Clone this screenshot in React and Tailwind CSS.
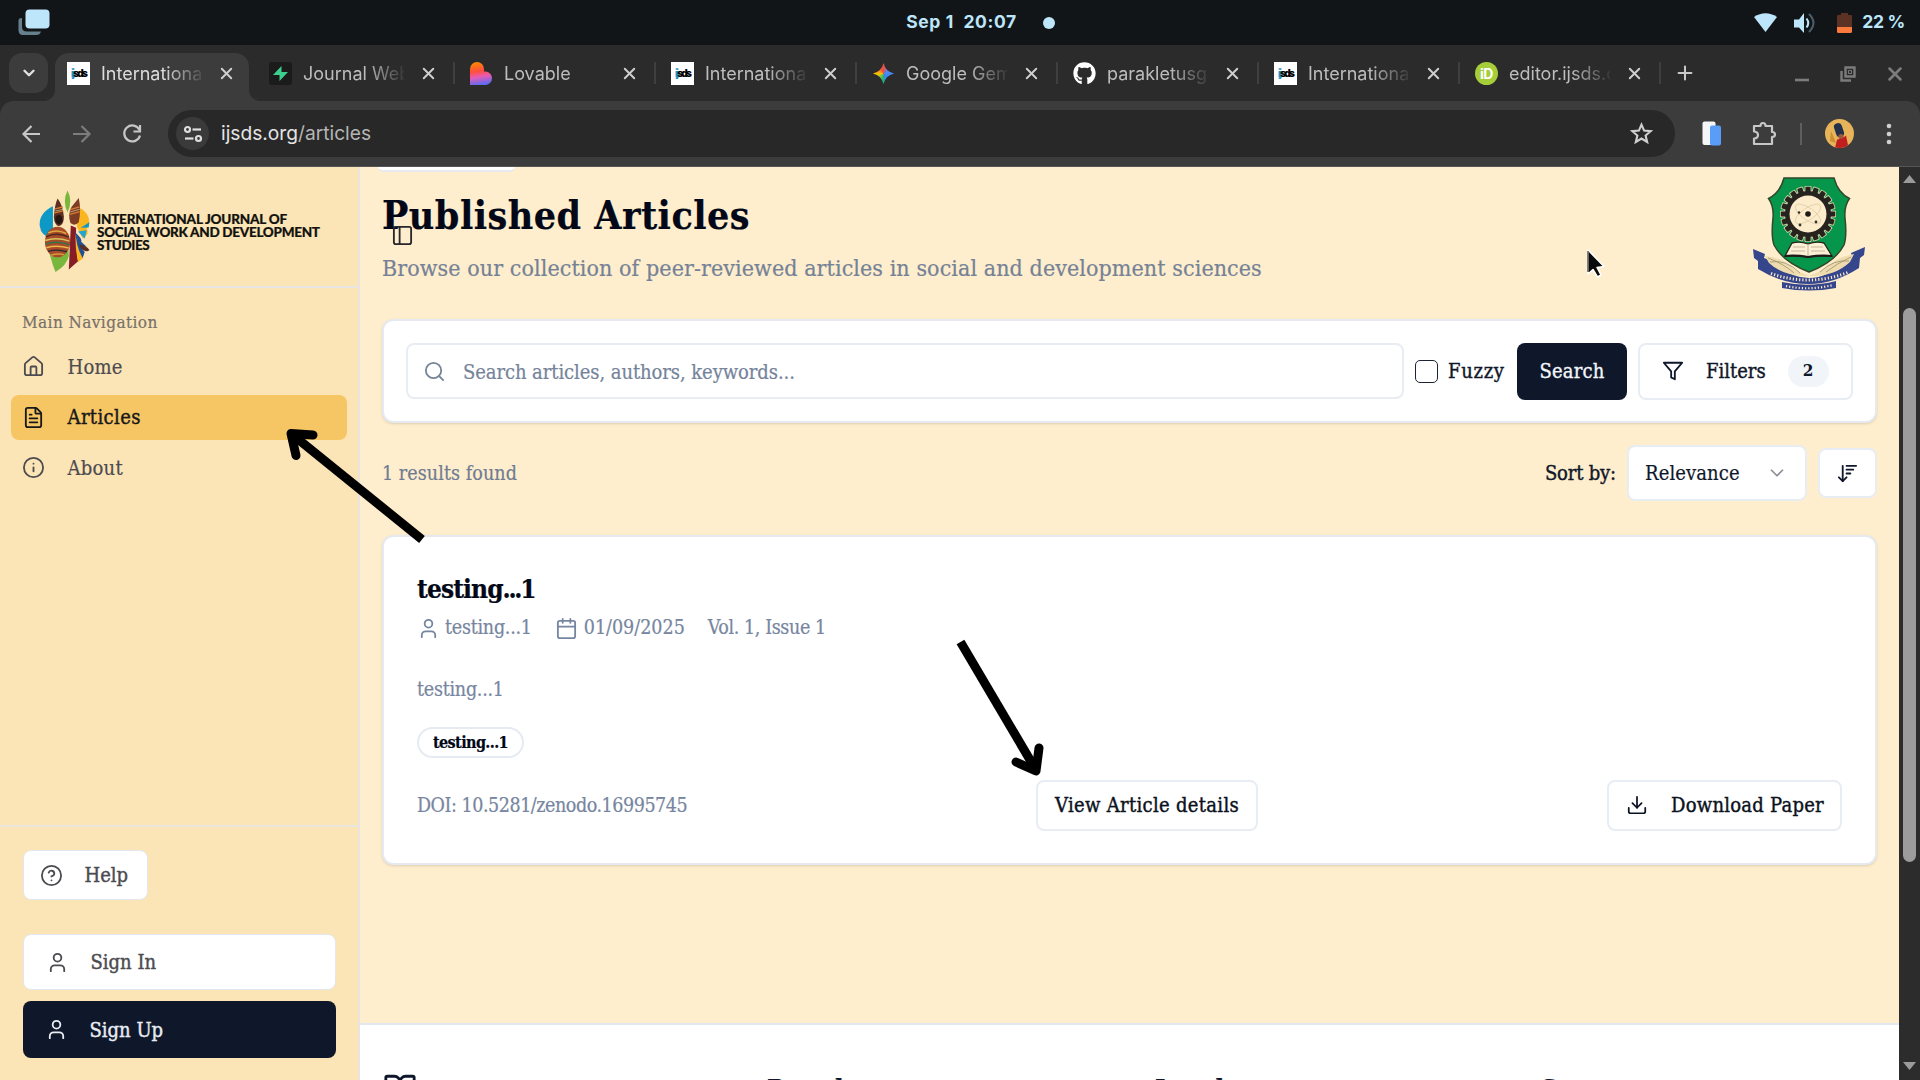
import React from "react";
import {
  House, FileText, Info, CircleHelp, User, Calendar, Search, Download,
  ChevronDown, ArrowDownWideNarrow, PanelLeft, BookOpen, X, Plus,
} from "lucide-react";
import { FaGithub } from "react-icons/fa";

function StatusBar() {
  return (
    <div className="grid h-[45px] shrink-0 grid-cols-[1fr_auto_1fr] items-center bg-[#111518] font-[Inter,sans-serif] text-[17.5px] font-bold text-[#bde6fb]">
      <svg className="ml-[18px] h-[27px] w-8" viewBox="0 0 32 27">
        <path d="M4 9 C1 9 .5 10 .5 12 V21 Q.5 26 5 26 H18 Q22 26 23 22.500 H9 Q4 22.500 4 18 Z" fill="#67808d" />
        <rect x="7.500" y=".5" width="24" height="19" rx="4" fill="#bde6fb" />
      </svg>
      <div className="flex items-center pl-[41px]">
        <span className="whitespace-pre tracking-[.62px]">Sep 1  20:07</span>
        <span className="ml-[26px] size-3 rounded-full bg-[#bde6fb]" />
      </div>
      <div className="flex items-center justify-end pr-[15px]">
        <svg className="mr-[17px] h-5 w-[23px]" viewBox="0 0 23 20">
          <path d="M0 4 Q11.500 -3.500 23 4 L11.500 19 Z" fill="#bde6fb" />
        </svg>
        <svg className="mr-[21px] h-[22px] w-[22px]" viewBox="0 0 22 22">
          <path d="M0 7.500 H5 L10 1 V21 L5 15.500 H0 Z" fill="#bde6fb" />
          <path d="M12.500 6.500 Q16 11 12.500 15.500" fill="none" stroke="#bde6fb" strokeWidth="2" />
          <path d="M15 2 Q24 11 15 20" fill="none" stroke="#4b5f6a" strokeWidth="2" />
        </svg>
        <svg className="mr-[10px] h-5 w-[15px]" viewBox="0 0 15 20">
          <path d="M1 2 H4 V0 H11 V2 H14 Q15 2 15 3 V14 H0 V3 Q0 2 1 2 Z" fill="#5b3223" />
          <path d="M0 14 H15 V18.500 Q15 20 13.500 20 H1.500 Q0 20 0 18.500 Z" fill="#f97a3c" />
        </svg>
        <span className="tracking-[-.3px]">22 %</span>
      </div>
    </div>
  );
}

function JournalFavicon() {
  return (
    <span className="flex size-[23px] shrink-0 items-center justify-center bg-white pb-[2px] font-[Inter,sans-serif] text-[10px] font-black leading-none tracking-[-1.8px]">
      <span className="text-[#2490c8]">ij</span><span className="text-black">sds</span>
    </span>
  );
}

function SupabaseFavicon() {
  return (
    <svg className="size-[23px] shrink-0" viewBox="0 0 23 23">
      <rect width="23" height="23" rx="3" fill="#1b1b1b" />
      <path d="M12.500 4 L4 13 H10.500 V19 L19 10 H12.500 Z" fill="#3ecf8e" />
    </svg>
  );
}

function LovableFavicon() {
  return (
    <svg className="size-[23px] shrink-0" viewBox="0 0 23 23">
      <defs>
        <linearGradient id="lov" x1=".3" y1="0" x2=".45" y2="1">
          <stop offset="0" stopColor="#ff8a00" /><stop offset=".4" stopColor="#ff4f3d" />
          <stop offset=".65" stopColor="#e85bb5" /><stop offset="1" stopColor="#5a6cf5" />
        </linearGradient>
      </defs>
      <path d="M7 0 A7 7 0 0 1 14 7 V9.500 H16 A6.800 6.800 0 0 1 16 23 H0 V7 A7 7 0 0 1 7 0 Z" fill="url(#lov)" />
    </svg>
  );
}

function GeminiFavicon() {
  return (
    <span className="flex size-[23px] shrink-0 items-center justify-center">
      <span className="size-[21px] bg-[conic-gradient(from_0deg,#e8504a,#4b8bf5_70deg,#3b82f6_150deg,#22b573_185deg,#f5c400_265deg,#f0503c_340deg,#e8504a)] [clip-path:path('M10.5_0_Q12.500_8.500_21_10.5_Q12.500_12.500_10.5_21_Q8.500_12.500_0_10.5_Q8.500_8.500_10.5_0Z')]" />
    </span>
  );
}

function OrcidFavicon() {
  return (
    <span className="flex size-[23px] shrink-0 items-center justify-center rounded-full bg-[#a6ce39] font-[Inter,sans-serif] text-[14px] font-bold leading-none tracking-[-.5px] text-white">iD</span>
  );
}

const TABS = [
  { icon: <JournalFavicon />, title: "International", active: true },
  { icon: <SupabaseFavicon />, title: "Journal Webs" },
  { icon: <LovableFavicon />, title: "Lovable" },
  { icon: <JournalFavicon />, title: "International" },
  { icon: <GeminiFavicon />, title: "Google Gemini" },
  { icon: <FaGithub className="size-[23px] shrink-0 text-white" />, title: "parakletusgit" },
  { icon: <JournalFavicon />, title: "International" },
  { icon: <OrcidFavicon />, title: "editor.ijsds.org" },
];

function Tab({ icon, title, active, divider }) {
  return (
    <div className={"relative flex h-[48px] shrink-0 items-start pt-[9px] " + (active ? "w-[194px] mr-[5px] pl-[12px] bg-[#3c3c3c] rounded-t-[14px] text-[#dcdcdc]" : "w-[201px] pl-[15px] text-[#bdbdbd]")}>
      {active && (
        <>
          <span className="absolute -left-3 bottom-0 size-3 bg-[radial-gradient(circle_at_0_0,#2b2b2b_12px,#3c3c3c_12.5px)]" />
          <span className="absolute -right-3 bottom-0 size-3 bg-[radial-gradient(circle_at_100%_0,#2b2b2b_12px,#3c3c3c_12.5px)]" />
        </>
      )}
      {icon}
      <span className="ml-[11px] w-[101px] overflow-hidden whitespace-nowrap text-[18px] leading-[24px] [mask-image:linear-gradient(to_right,black_62%,transparent_104%)]">{title}</span>
      <X className="ml-[15px] mt-[2px] size-[19px] shrink-0 text-[#cfcfcf]" strokeWidth={2.4} />
      {divider && <span className="absolute right-0 top-[9px] h-[22px] w-[2px] bg-[#3f3f3f]" />}
    </div>
  );
}

function TabStrip() {
  return (
    <div className="flex h-[56px] shrink-0 items-start bg-[#2b2b2b] pl-[9px] pt-2 font-[Inter,sans-serif]">
      <div className="mr-[7px] flex h-10 w-[39px] items-center justify-center rounded-[13px] bg-[#3c3c3c]">
        <ChevronDown className="size-[18px] text-[#e0e0e0]" strokeWidth={3.2} />
      </div>
      {TABS.map((t, i) => <Tab key={i} {...t} divider={i > 0} />)}
      <Plus className="ml-[13px] mt-[9px] size-[22px] text-[#c8c8c8]" strokeWidth={2.2} />
      <div className="ml-auto flex items-center gap-[26px] pr-[14px] pt-[10px] text-[#7c7c7c]">
        <svg className="size-5" viewBox="0 0 20 20"><path d="M3 16 H17" stroke="currentColor" strokeWidth="2.600" /></svg>
        <svg className="size-5" viewBox="0 0 20 20" fill="none" stroke="currentColor" strokeWidth="2.400">
          <path d="M7.500 3.500 H16.500 V12.500 H7.500 Z" /><path d="M3.500 7 V16.500 H13" />
          <path d="M10.500 6.500 H13.500 V9.500 H10.500 Z" strokeWidth="1" />
        </svg>
        <X className="size-[22px]" strokeWidth={2.8} />
      </div>
    </div>
  );
}

function Toolbar() {
  return (
    <div className="flex h-[66px] shrink-0 bg-[#2b2b2b]">
      <div className="flex w-full items-center rounded-t-[14px] border-b border-[#555] bg-[#3c3c3c] text-[#c7c7c7]">
        <svg className="ml-[21px] size-5" viewBox="0 0 20 20" fill="none" stroke="currentColor" strokeWidth="2.200"><path d="M10.500 2 L2.500 10 L10.500 18 M3 10 H19" /></svg>
        <svg className="ml-[31px] size-5 text-[#7d7d7d]" viewBox="0 0 20 20" fill="none" stroke="currentColor" strokeWidth="2.200"><path d="M9.500 2 L17.500 10 L9.500 18 M17 10 H1" /></svg>
        <svg className="ml-[29px] size-[22px]" viewBox="0 0 22 22" fill="none" stroke="currentColor" strokeWidth="2.200">
          <path d="M18.500 7 A8 8 0 1 0 19 12.500" /><path d="M19 2 V8.500 H12.500" />
        </svg>
        <div className="ml-[25px] flex h-[47px] w-[1507px] items-center rounded-full bg-[#282828] pl-2">
          <div className="flex size-[33px] items-center justify-center rounded-full bg-[#3a3a3a]">
            <svg className="size-5" viewBox="0 0 20 20" fill="none" stroke="#dedede" strokeWidth="2.200">
              <circle cx="4.500" cy="5.500" r="2.500" /><path d="M9.500 5.500 H18" /><circle cx="15.500" cy="14.500" r="2.500" /><path d="M2 14.500 H10.500" />
            </svg>
          </div>
          <span className="ml-[12px] font-[Inter,sans-serif] text-[19.2px] text-[#b5b5b5]"><span className="text-[#e4e4e4]">ijsds.org</span>/articles</span>
          <svg className="ml-auto mr-[22px] size-[23px]" viewBox="0 0 24 24" fill="none" stroke="#d0d0d0" strokeWidth="2.200">
            <path d="M12 2.800 L14.700 9 L21.500 9.600 L16.300 14.100 L17.900 20.800 L12 17.200 L6.100 20.800 L7.700 14.100 L2.500 9.600 L9.300 9 Z" />
          </svg>
        </div>
        <svg className="ml-[27px] h-[25px] w-[20px]" viewBox="0 0 20 25">
          <rect x=".5" y=".5" width="13" height="23.500" rx="2" fill="#f5f6f8" />
          <rect x="8" y="4.500" width="11" height="20" rx="2" fill="#5a9df8" />
        </svg>
        <svg className="ml-[29px] size-[26px]" viewBox="0 0 26 26" fill="none" stroke="#c7c7c7" strokeWidth="2.200" strokeLinejoin="round">
          <path d="M3 5 H9.500 Q9.500 2 12 2 T14.500 5 H21 V11 Q24 11 24 13.500 T21 16 V23 H3 V17.500 Q7 17.200 7 14 T3 10.500 Z" />
        </svg>
        <span className="ml-[23px] h-[22px] w-[2px] bg-[#5e5e5e]" />
        <svg className="ml-[23px] size-[29px]" viewBox="0 0 29 29">
          <clipPath id="av"><circle cx="14.500" cy="14.500" r="14.500" /></clipPath>
          <g clipPath="url(#av)">
            <rect width="29" height="29" fill="#e8b45a" />
            <path d="M6 12 L11 24 L5 22 Z" fill="#c98f35" />
            <rect x="10" y="4" width="8" height="14" rx="3.500" transform="rotate(-18 14 11)" fill="#25304a" />
            <circle cx="16" cy="17.500" r="2.600" fill="#9a5a3c" />
            <path d="M10 29 L12 20.500 L17 19.500 L21 16.500 L23 26 L20 29 Z" fill="#c01f1f" />
          </g>
        </svg>
        <svg className="ml-[32px] h-[22px] w-[6px]" viewBox="0 0 6 22" fill="#cfcfcf">
          <circle cx="3" cy="3" r="2.300" /><circle cx="3" cy="11" r="2.300" /><circle cx="3" cy="19" r="2.300" />
        </svg>
      </div>
    </div>
  );
}

function JournalLogo() {
  return (
    <svg className="h-[83px] w-[53px] shrink-0" viewBox="115 91 160 250">
      <path d="M160 140 Q118 160 120 198 Q124 232 160 238 Z" fill="#0e98c6" />
      <path d="M236 142 Q270 158 270 190 L262 208 Q272 225 250 236 L232 200 Z" fill="#fbb51e" />
      <path d="M244 205 L270 188 L268 204 Z" fill="#0e98c6" />
      <path d="M236 216 L262 212 L256 238 Z" fill="#20a5cf" />
      <path d="M204 92 Q221 124 204 158 Q188 124 204 92 Z" fill="#79b63c" />
      <path d="M146 268 Q160 322 168 338 Q202 318 208 290 L206 250 Z" fill="#79b63c" />
      <path d="M174 116 Q190 136 193 170 Q194 196 178 200 Q164 196 163 172 Q165 136 174 116 Z" fill="#5c2f20" />
      <path d="M238 115 Q246 150 238 188 Q226 202 213 190 Q204 165 216 142 Z" fill="#7c3d24" />
      <path d="M166 148 L190 142 M165 160 L191 154 M213 150 L240 142 M211 164 L241 156" stroke="#d67c35" strokeWidth="4" />
      <path d="M167 154 L191 149 M212 157 L241 149" stroke="#ded49c" strokeWidth="2" />
      <ellipse cx="178" cy="180" rx="11" ry="14" fill="#261611" />
      <ellipse cx="174" cy="248" rx="38" ry="46" fill="#a84b29" />
      <g fill="none" strokeWidth="4.500">
        <path d="M146 220 Q172 208 200 222" stroke="#e0a740" /><path d="M139 232 Q172 216 208 233" stroke="#472a1d" />
        <path d="M137 243 Q170 232 210 245" stroke="#d7c35d" /><path d="M137 254 Q172 242 210 256" stroke="#31754f" />
        <path d="M140 265 Q172 256 208 266" stroke="#ecb746" /><path d="M145 276 Q174 268 202 277" stroke="#2a2a32" />
        <path d="M155 287 Q174 282 194 286" stroke="#d69c3d" />
      </g>
      <path d="M214 198 L230 205 Q228 260 236 306 L208 331 Z" fill="#861d26" />
      <path d="M229 222 Q234 270 252 296 L236 308 Q226 262 229 222 Z" fill="#fbb51e" />
      <path d="M228 214 Q238 260 256 278 L250 296 Q230 264 228 214 Z" fill="#214f94" />
      <path d="M228 220 Q248 236 246 248 L262 262 L240 258 Z" fill="#214f94" />
      <path d="M240 256 Q262 258 270 272 Q262 282 244 266 Z" fill="#5a2c22" />
    </svg>
  );
}

function NavItem({ icon: Icon, label, active, textClass }) {
  return (
    <div className={"flex h-[45px] items-center rounded-[8px] pl-[11px] text-[20px] " + (active ? "bg-[#f7c664] text-[#18181b] [-webkit-text-stroke:.4px]" : "text-[#4b4b50]")}>
      <Icon className="size-[23px]" strokeWidth={1.9} />
      <span className={"ml-[22.500px] " + textClass}>{label}</span>
    </div>
  );
}

function Sidebar() {
  return (
    <aside className="flex w-[360px] shrink-0 flex-col border-r-2 border-[#e9e5dc] bg-[#fbe4b5]">
      <div className="flex h-[121px] shrink-0 items-start border-b-2 border-[#e7e6e2] pl-[38px] pt-[23px]">
        <JournalLogo />
        <div className="ml-[6px] mt-[23px] whitespace-nowrap font-[Lato,sans-serif] text-[13.5px] font-black leading-[12.8px] text-[#12120e] [-webkit-text-stroke:.2px]">
          <div className="tracking-[-.2px]">INTERNATIONAL JOURNAL OF</div>
          <div className="tracking-[-.29px]">SOCIAL WORK AND DEVELOPMENT</div>
          <div className="tracking-[-.4px]">STUDIES</div>
        </div>
      </div>
      <div className="px-[11px] pt-[22px]">
        <div className="mb-[8px] flex h-[26px] items-center pl-[11px] text-[17px] tracking-[.42px] text-[#77716a]">Main Navigation</div>
        <nav className="flex flex-col gap-[5.500px]">
          <NavItem icon={House} label="Home" textClass="tracking-[.25px]" />
          <NavItem icon={FileText} label="Articles" active textClass="tracking-[.38px]" />
          <NavItem icon={Info} label="About" textClass="tracking-[.25px]" />
        </nav>
      </div>
      <div className="mt-auto flex h-[255px] shrink-0 flex-col items-start border-t-2 border-[#e9e6de] px-[22.500px] pt-[23px] text-[20px] text-[#4b4b50] [-webkit-text-stroke:.4px]">
        <div className="flex h-[50px] w-[125px] items-center rounded-[8px] border border-[#e2e8f0] bg-white pl-[16px]">
          <CircleHelp className="size-[23px]" strokeWidth={1.9} /><span className="ml-[22px]">Help</span>
        </div>
        <div className="mt-[34px] flex h-[56px] w-full items-center rounded-[8px] border border-[#e2e8f0] bg-white pl-[22px]">
          <User className="size-[23px]" strokeWidth={1.9} /><span className="ml-[22px]">Sign In</span>
        </div>
        <div className="mt-[11px] flex h-[57px] w-full items-center rounded-[8px] bg-[#0f172a] pl-[22px] text-[#e9edf3]">
          <User className="size-[23px]" strokeWidth={1.9} /><span className="ml-[22px]">Sign Up</span>
        </div>
      </div>
    </aside>
  );
}

function UniversityCrest() {
  const teeth = Array.from({ length: 20 }, (_, i) => i * 18);
  return (
    <svg className="absolute left-[1390px] top-[7px] h-[120px] w-[120px]" viewBox="0 0 120 120">
      <path d="M34 4 H84 Q88 19 99.500 24.500 Q94 32 95 44 Q97 62 94 71 Q85 88 59 98 Q33 88 24 71 Q21 62 23 44 Q24 32 18.500 24.500 Q30 19 34 4 Z" fill="#05964b" stroke="#33472a" strokeWidth="1.500" />
      <g transform="translate(58 40)">
        <circle r="24" fill="#f3e6c3" />
        {teeth.map((a) => <rect key={a} x="-3.500" y="-28" width="7" height="8" rx="1" transform={`rotate(${a})`} fill="#c9cfa0" />)}
        {teeth.map((a) => <rect key={a} x="-2.600" y="-27.200" width="5.200" height="8" rx="1" transform={`rotate(${a})`} fill="#26221e" />)}
        <circle r="23" fill="#26221e" />
        <circle r="18.500" fill="#fdeccb" />
        <ellipse rx="15" ry="6" fill="none" stroke="#ddc9a0" strokeWidth=".7" transform="rotate(35)" />
        <ellipse rx="15" ry="6" fill="none" stroke="#ddc9a0" strokeWidth=".7" transform="rotate(-35)" />
        <circle r="2.800" fill="#1d1a18" /><circle cx="-9" cy="-1.500" r="1.300" fill="#333" />
        <circle cx="8" cy="8" r="1.400" fill="#333" /><circle cx="-8" cy="11" r="1.400" fill="#333" />
      </g>
      <path d="M42 69 Q50 67 58 70 Q66 67 74 69 L82 82 Q70 81 58 83 Q46 81 35 82 Z" fill="#fdf0d6" stroke="#2b241c" strokeWidth="1.300" />
      <path d="M58 70 V83 M43 73 H55 M41 77 H55 M61 73 H73 M61 77 H75" stroke="#b9a98b" strokeWidth=".8" />
      <path d="M35 82 Q46 81 58 83 Q70 81 82 82" fill="none" stroke="#211b16" strokeWidth="2.200" />
      <path d="M3 75 L15 80 L14 84 L22 87 Q40 104 59 104 Q78 104 96 86 L102 83 L101 79 L115 73 L114 81 L110 84 L109 94 Q84 110 59 110 Q32 110 8 95 L8 87 L4 84 Z" fill="#35468c" />
      <path d="M15 82 Q34 84 45 96 L59 102 Q34 103 19 89 Z M104 80 Q84 84 73 96 L59 102 Q84 103 100 88 Z" fill="#efdcae" />
      <path d="M20 88 Q36 85 50 99 M18 84 Q34 90 44 99 M99 87 Q84 85 70 98 M101 83 Q86 90 76 98" stroke="#9a906f" strokeWidth=".8" fill="none" />
      <path d="M32 108 Q59 114 86 107 V114 Q59 119 32 114 Z" fill="#35468c" />
      <path d="M21 99.500 Q59 113 98 98.500" fill="none" stroke="#fdeccb" strokeWidth="3" strokeDasharray="1.200 2" />
      <path d="M36 112 Q59 117 83 111" fill="none" stroke="#fdeccb" strokeWidth="2.200" strokeDasharray="1.200 2" />
    </svg>
  );
}

function Funnel() {
  return (
    <svg className="size-[22px]" viewBox="0 0 24 24" fill="none" stroke="currentColor" strokeWidth="2" strokeLinecap="round" strokeLinejoin="round">
      <polygon points="22 3 2 3 10 12.460 10 19 14 21 14 12.460 22 3" />
    </svg>
  );
}

function SearchCard() {
  return (
    <div className="mt-[34px] flex h-[104px] shrink-0 items-center rounded-[11px] border-2 border-[#e6eaf0] bg-white px-[22px] shadow-sm">
      <div className="flex h-[56px] w-[998px] items-center rounded-[8px] border-2 border-[#e8edf3] pl-[15px] text-[20px] text-[#75839a]">
        <Search className="size-[23px]" strokeWidth={1.9} />
        <span className="ml-[17px] pt-px tracking-[-.08px]">Search articles, authors, keywords...</span>
      </div>
      <span className="ml-[11px] size-[23px] rounded-[5px] border-[1.500px] border-[#1c2434]" />
      <span className="ml-[10px] w-[58px] text-[20px] tracking-[.7px] text-[#0f172a] [-webkit-text-stroke:.4px]">Fuzzy</span>
      <button className="ml-[11px] h-[57px] w-[110px] rounded-[8px] bg-[#0f172a] text-[20px] tracking-[.2px] text-[#f3f6fa] [-webkit-text-stroke:.35px]">Search</button>
      <button className="ml-[11px] flex h-[57px] w-[215px] items-center rounded-[8px] border-2 border-[#e8edf3] pl-[22px] text-[20px] text-[#0f172a] [-webkit-text-stroke:.4px]">
        <Funnel />
        <span className="ml-[22px]">Filters</span>
        <span className="ml-[22px] flex h-[31px] w-[41px] items-center justify-center rounded-full bg-[#f1f5f9] text-[17px] font-bold [-webkit-text-stroke:0]">2</span>
      </button>
    </div>
  );
}

function ResultsBar() {
  return (
    <div className="mt-[22px] flex h-[56px] shrink-0 items-center text-[20px] text-[#0f172a]">
      <span className="pt-px text-[19.500px] tracking-[.07px] text-[#6f7c92]">1 results found</span>
      <span className="ml-auto mr-[11px] tracking-[-.17px] [-webkit-text-stroke:.4px]">Sort by:</span>
      <div className="flex h-[56px] w-[180px] items-center justify-between rounded-[8px] border-2 border-[#e8edf3] bg-white pl-[16px] pr-[17px]">
        <span className="tracking-[.1px]">Relevance</span>
        <ChevronDown className="size-[22px] text-[#8b8f98]" strokeWidth={1.9} />
      </div>
      <div className="ml-[11px] flex h-[50px] w-[59px] items-center justify-center rounded-[8px] border-2 border-[#e8edf3] bg-white">
        <ArrowDownWideNarrow className="size-[23px]" strokeWidth={1.9} />
      </div>
    </div>
  );
}

function ArticleCard() {
  return (
    <div className="mt-[34px] flex h-[330px] shrink-0 flex-col rounded-[11px] border-2 border-[#e6eaf0] bg-white px-[33px] text-[19.500px] text-[#7786a0] shadow-sm">
      <h2 className="mt-[34px] h-[36px] text-[26px] font-bold leading-[36px] tracking-[-.9px] text-[#020817]">testing<span className="tracking-[-2.300px]">...</span>1</h2>
      <div className="mt-[7px] flex h-[28px] items-center">
        <User className="size-[23px]" strokeWidth={1.900} />
        <span className="ml-[5px] tracking-[-.25px]">testing...1</span>
        <Calendar className="ml-[23px] size-[23px]" strokeWidth={1.900} />
        <span className="ml-[6px]">01/09/2025</span>
        <span className="ml-[23px] tracking-[-.39px]">Vol. 1, Issue 1</span>
      </div>
      <p className="mt-[33px] h-[30px] leading-[30px] tracking-[-.25px]">testing...1</p>
      <span className="mt-[22px] flex h-[31px] w-[107px] items-center justify-center rounded-full border-2 border-[#e6ebf2] text-[16px] font-bold tracking-[-.6px] text-[#020817]">testing...1</span>
      <div className="mt-[21px] flex h-[52px] items-center justify-between">
        <span className="w-[390px] pt-px tracking-[-.46px]">DOI: 10.5281/zenodo.16995745</span>
        <button className="mr-auto ml-[229px] h-[51px] w-[222px] rounded-[8px] border-2 border-[#e8edf3] text-[20px] tracking-[.31px] text-[#0b1220] [-webkit-text-stroke:.4px]">View Article details</button>
        <button className="flex h-[51px] w-[235px] items-center rounded-[8px] border-2 border-[#e8edf3] pl-[17px] text-[20px] tracking-[.25px] text-[#0b1220] [-webkit-text-stroke:.4px]">
          <Download className="size-[22px]" strokeWidth={1.9} />
          <span className="ml-[23px]">Download Paper</span>
        </button>
      </div>
    </div>
  );
}

function Footer() {
  return (
    <footer className="mt-auto grid h-[57px] shrink-0 grid-cols-[384px_388px_386px_1fr] overflow-hidden border-t-2 border-[#e2e8f0] bg-white pl-[23px] text-[25px] font-bold text-[#0f172a]">
      <div className="pt-[47px]"><BookOpen className="size-[34px]" strokeWidth={2} /></div>
      <div className="h-[40px] pt-[47px] leading-[34px]">Portal</div>
      <div className="h-[40px] pt-[47px] leading-[34px]">Legal</div>
      <div className="h-[40px] pt-[47px] leading-[34px]">Support</div>
    </footer>
  );
}

function Scrollbar() {
  return (
    <div className="flex w-[21px] shrink-0 flex-col items-center bg-[#2c2c2c] pt-[8px] pb-[10px]">
      <svg className="h-[8px] w-[13px]" viewBox="0 0 13 8"><path d="M0 8 L6.500 0 L13 8 Z" fill="#9b9b9b" /></svg>
      <span className="mt-[125px] h-[554px] w-[13px] rounded-full bg-[#9c9c9c]" />
      <svg className="mt-auto h-[8px] w-[13px]" viewBox="0 0 13 8"><path d="M0 0 L6.500 8 L13 0 Z" fill="#9b9b9b" /></svg>
    </div>
  );
}

function Annotations() {
  return (
    <svg className="pointer-events-none absolute inset-0 h-[1080px] w-[1920px]" viewBox="0 0 1920 1080" fill="none" stroke="#000" strokeWidth="9" strokeLinejoin="round">
      <path d="M422 539.500 L291 433.500" />
      <path d="M313 435 L291 433.500 L296 455.500" strokeLinecap="round" />
      <path d="M960.500 642 L1036 770" />
      <path d="M1016 762 L1036 771 L1039 748" strokeLinecap="round" />
      <path d="M1588 250 V274 L1593 269.500 L1597.500 277 L1601 275 L1597 267.500 L1604 266.500 Z" fill="#0a0a0a" stroke="#fff" strokeWidth="1.500" />
      <path d="M1588 251 V272" stroke="#0a0a0a" strokeWidth="1" />
    </svg>
  );
}

export default function App() {
  return (
    <div className="relative flex h-[1080px] w-[1920px] flex-col overflow-hidden">
      <StatusBar />
      <TabStrip />
      <Toolbar />
      <div className="flex min-h-0 flex-1 font-['DejaVu_Serif_Condensed','DejaVu_Serif',serif] [-webkit-text-stroke:.2px] [font-stretch:condensed]">
        <Sidebar />
        <main className="relative flex min-w-0 flex-1 flex-col bg-[#ffeecd]">
          <div className="flex min-h-0 flex-1 flex-col pl-[22px] pr-[22px]">
            <div className="-ml-[4px] h-[5px] w-[137px] shrink-0 rounded-b-[8px] border-b-2 border-[#e6eaf0] bg-white" />
            <h1 className="mt-[19px] h-[48px] shrink-0 text-[39px] font-bold leading-[48px] tracking-[.48px] text-[#020817]">Published Articles</h1>
            <p className="mt-[12px] h-[34px] shrink-0 text-[23px] leading-[34px] tracking-[.08px] text-[#758296]">Browse our collection of peer-reviewed articles in social and development sciences</p>
            <SearchCard />
            <ResultsBar />
            <ArticleCard />
          </div>
          <Footer />
          <PanelLeft className="absolute left-[30.500px] top-[56.500px] size-[23px] text-[#26262b]" strokeWidth={1.9} />
          <UniversityCrest />
        </main>
        <Scrollbar />
      </div>
      <Annotations />
    </div>
  );
}
